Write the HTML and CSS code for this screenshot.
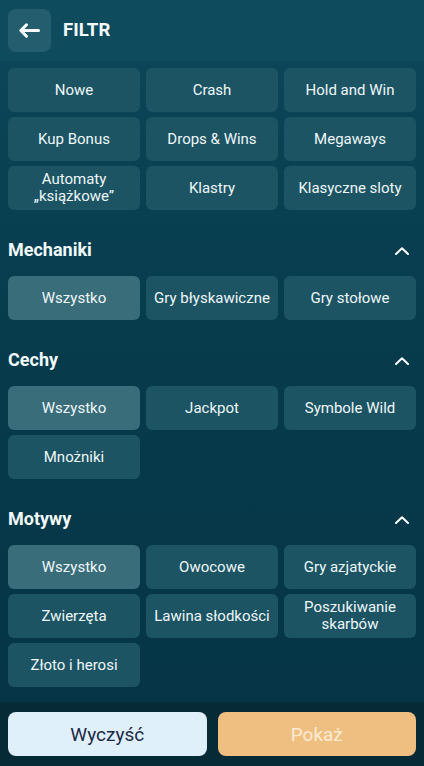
FILE: index.html
```html
<!DOCTYPE html>
<html lang="pl">
<head>
<meta charset="utf-8">
<title>Filtr</title>
<link rel="stylesheet" href="styles.css">
</head>
<body>
<div class="app">
  <header class="header">
    <button class="back" aria-label="Wstecz">
      <svg width="43" height="43" viewBox="0 0 43 43"><path d="M30.5 21.5H13M18.5 15.8L12.8 21.5L18.5 27.2" fill="none" stroke="#fff" stroke-width="3" stroke-linecap="round" stroke-linejoin="round"/></svg>
    </button>
    <h1 class="title">FILTR</h1>
  </header>
  <main class="content">
    <div class="grid">
      <button class="chip">Nowe</button>
      <button class="chip">Crash</button>
      <button class="chip">Hold and Win</button>
      <button class="chip">Kup Bonus</button>
      <button class="chip">Drops &amp; Wins</button>
      <button class="chip">Megaways</button>
      <button class="chip">Automaty<br>„książkowe”</button>
      <button class="chip">Klastry</button>
      <button class="chip">Klasyczne sloty</button>
    </div>
    <section class="section">
      <div class="section-head"><h2>Mechaniki</h2><svg class="chev" width="14" height="8" viewBox="0 0 14 8"><path d="M1 7L7 1.3L13 7" fill="none" stroke="#fff" stroke-width="2" stroke-linecap="round" stroke-linejoin="round"/></svg></div>
      <div class="grid">
        <button class="chip active">Wszystko</button>
        <button class="chip">Gry błyskawiczne</button>
        <button class="chip">Gry stołowe</button>
      </div>
    </section>
    <section class="section">
      <div class="section-head"><h2>Cechy</h2><svg class="chev" width="14" height="8" viewBox="0 0 14 8"><path d="M1 7L7 1.3L13 7" fill="none" stroke="#fff" stroke-width="2" stroke-linecap="round" stroke-linejoin="round"/></svg></div>
      <div class="grid">
        <button class="chip active">Wszystko</button>
        <button class="chip">Jackpot</button>
        <button class="chip">Symbole Wild</button>
        <button class="chip">Mnożniki</button>
      </div>
    </section>
    <section class="section">
      <div class="section-head"><h2>Motywy</h2><svg class="chev" width="14" height="8" viewBox="0 0 14 8"><path d="M1 7L7 1.3L13 7" fill="none" stroke="#fff" stroke-width="2" stroke-linecap="round" stroke-linejoin="round"/></svg></div>
      <div class="grid">
        <button class="chip active">Wszystko</button>
        <button class="chip">Owocowe</button>
        <button class="chip">Gry azjatyckie</button>
        <button class="chip">Zwierzęta</button>
        <button class="chip">Lawina słodkości</button>
        <button class="chip">Poszukiwanie<br>skarbów</button>
        <button class="chip">Złoto i herosi</button>
      </div>
    </section>
  </main>
  <footer class="footer">
    <button class="btn clear">Wyczyść</button>
    <button class="btn show">Pokaż</button>
  </footer>
</div>
</body>
</html>
```
FILE: styles.css
```css
* { box-sizing: border-box; }
html, body { margin: 0; padding: 0; }
body {
  font-family: Roboto, "Noto Sans", "Liberation Sans", sans-serif;
  background: #053646;
  color: #eef7f9;
}
.app {
  width: 424px;
  height: 766px;
  display: flex;
  flex-direction: column;
  overflow: hidden;
}
.header {
  height: 62px;
  flex: 0 0 62px;
  display: flex;
  align-items: center;
  padding: 0 8px 1px;
  background: #0e4b5d;
  border-bottom: 1px solid #0a4254;
}
.back {
  width: 43px;
  height: 43px;
  padding: 0;
  border: 0;
  border-radius: 8px;
  background: #245e6e;
  display: flex;
  align-items: center;
  justify-content: center;
}
.back svg { display: block; }
.title {
  margin: 0 0 0 12px;
  font-size: 18.5px;
  font-weight: 700;
  color: #f4fafc;
  letter-spacing: 0.1px;
}
.content {
  flex: 1 1 auto;
  overflow: hidden;
  padding: 6px 8px 0;
  background: linear-gradient(180deg, #0b4557 0%, #073c4d 40%, #053546 100%);
}
.grid {
  display: grid;
  grid-template-columns: repeat(3, 1fr);
  column-gap: 6px;
  row-gap: 5px;
}
.chip {
  height: 44px;
  border: 0;
  border-radius: 6px;
  background: #1d5463;
  color: #eef7f9;
  font-family: inherit;
  font-size: 15px;
  line-height: 17px;
  padding: 0 4px;
  text-align: center;
}
.chip.active {
  background: #3a6d7a;
}
.section {
  padding-top: 28px;
}
.section-head {
  display: flex;
  align-items: center;
  justify-content: space-between;
  height: 24px;
  margin-bottom: 14px;
  padding-right: 7px;
}
.section-head h2 {
  margin: 0;
  font-size: 18px;
  line-height: 24px;
  font-weight: 700;
  color: #f2f9fb;
}
.chev { display: block; margin-top: 1px; }
.footer {
  flex: 0 0 64px;
  height: 64px;
  display: flex;
  gap: 11px;
  padding: 10px 8px 10px;
  background: #062a36;
}
.btn {
  flex: 1 1 0;
  height: 44px;
  border: 0;
  border-radius: 8px;
  font-family: inherit;
  font-size: 19px;
}
.clear {
  background: #e0f0fa;
  color: #1b2946;
}
.show {
  background: #efbf81;
  color: #fdebd3;
}
```
